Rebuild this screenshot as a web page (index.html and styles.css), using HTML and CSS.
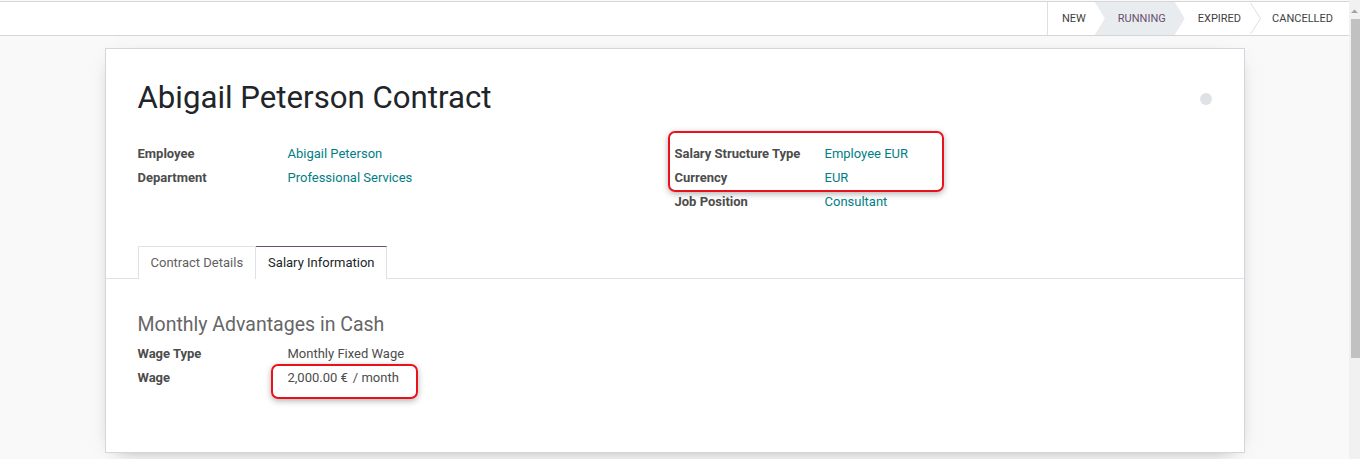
FILE: index.html
```html
<!DOCTYPE html>
<html>
<head>
<meta charset="utf-8">
<link rel="stylesheet" href="styles.css">
</head>
<body>
<div class="app">
  <header class="topbar">
    <div class="statusbar">
      <span class="step first">NEW</span>
      <span class="step current">RUNNING</span>
      <span class="step after">EXPIRED</span>
      <svg class="sep" width="11" height="33" viewBox="0 0 11 33"><polyline points="0.5,1 10.5,16.5 0.5,32" fill="none" stroke="#dcdfe3" stroke-width="1"/></svg>
      <span class="step last">CANCELLED</span>
    </div>
  </header>
  <main class="content">
    <section class="sheet">
      <div class="title-row">
        <h1 class="title">Abigail Peterson Contract</h1>
        <span class="dot"></span>
      </div>
      <div class="groups">
        <div class="group">
          <div class="row"><span class="label">Employee</span><span class="value link">Abigail Peterson</span></div>
          <div class="row"><span class="label">Department</span><span class="value link">Professional Services</span></div>
        </div>
        <div class="group">
          <div class="row"><span class="label">Salary Structure Type</span><span class="value link">Employee EUR</span></div>
          <div class="row"><span class="label">Currency</span><span class="value link">EUR</span></div>
          <div class="row"><span class="label">Job Position</span><span class="value link">Consultant</span></div>
        </div>
      </div>
      <nav class="tabs">
        <span class="tab">Contract Details</span>
        <span class="tab active">Salary Information</span>
      </nav>
      <div class="tab-content">
        <h2 class="section">Monthly Advantages in Cash</h2>
        <div class="row"><span class="label">Wage Type</span><span class="value">Monthly Fixed Wage</span></div>
        <div class="row"><span class="label">Wage</span><span class="value">2,000.00 €<span class="unit">/ month</span></span></div>
      </div>
      <div class="mark mark-salary"></div>
      <div class="mark mark-wage"></div>
    </section>
  </main>
</div>
<div class="scrollbar">
  <svg class="arrow" width="11" height="8" viewBox="0 0 11 8"><polygon points="2,6 9,6 5.5,2.5" fill="#a3a3a3"/></svg>
  <div class="thumb"></div>
</div>
</body>
</html>
```

FILE: styles.css
```css
* { box-sizing: border-box; }
html, body { margin: 0; padding: 0; }
body {
  display: flex;
  width: 1360px;
  height: 459px;
  overflow: hidden;
  font-family: Roboto, "Liberation Sans", sans-serif;
  font-size: 13px;
  color: #4c4c4c;
  background: #f9f9f9;
}
.app {
  width: 1349px;
  flex: none;
  display: flex;
  flex-direction: column;
}
.topbar {
  margin-top: 1px;
  height: 35px;
  background: #fff;
  border-top: 1px solid #d6d6d6;
  border-bottom: 1px solid #d6d6d6;
  display: flex;
  justify-content: flex-end;
}
.statusbar {
  display: flex;
  height: 33px;
  border-left: 1px solid #dcdfe3;
}
.step {
  display: flex;
  align-items: center;
  height: 33px;
  font-size: 11px;
  color: #3f3f3f;
  padding: 0 9px 0 23px;
  white-space: nowrap;
}
.step.first { padding-left: 14px; }
.step.current {
  background: #e9ecef;
  color: #674f73;
  padding-right: 19px;
  clip-path: polygon(0 0, calc(100% - 10px) 0, 100% 50%, calc(100% - 10px) 100%, 0 100%, 10px 50%);
}
.step.after { margin-left: -10px; }
.sep { flex: none; display: block; }
.step.last { padding-left: 11px; padding-right: 16px; }

.content {
  flex: 1;
  padding-top: 12px;
}
.sheet {
  position: relative;
  width: 1140px;
  height: 405px;
  margin: 0 auto;
  background: #fff;
  border: 1px solid #d3d7dd;
  box-shadow: 0 5px 20px -12px rgba(0,0,0,0.55);
  padding: 30px 32px 0 32px;
}
.title-row {
  display: flex;
  justify-content: space-between;
  align-items: flex-start;
}
.title {
  margin: 0;
  font-size: 31.2px;
  font-weight: 400;
  line-height: 37px;
  color: #212529;
}
.dot {
  width: 12px;
  height: 12px;
  border-radius: 50%;
  background: #dee2e6;
  margin-top: 14px;
}
.groups {
  display: grid;
  grid-template-columns: 1fr 1fr;
  margin-top: 26px;
  height: 72px;
}
.row {
  display: flex;
  height: 24px;
  line-height: 24px;
}
.label {
  width: 150px;
  flex: none;
  font-weight: 700;
  color: #4c4c4c;
}
.value { color: #4c4c4c; }
.value.link { color: #017e84; }
.unit { margin-left: 5px; }

.tabs {
  display: flex;
  margin: 32px -32px 0;
  padding-left: 32px;
  border-bottom: 1px solid #dee2e6;
  height: 33px;
}
.tab {
  height: 33px;
  padding: 0 12px;
  line-height: 31px;
  border: 1px solid #dee2e6;
  border-bottom: none;
  color: #5f5f5f;
  background: #fff;
}
.tab.active {
  border-top-color: #714b67;
  color: #212529;
  border-left: none;
  padding-left: 12px;
  padding-right: 11px;
}
.tab-content { padding-top: 34px; }
.section {
  margin: 0 0 6px;
  font-size: 19.5px;
  font-weight: 400;
  line-height: 23px;
  color: #666;
}

.mark {
  position: absolute;
  border: 2px solid #e8121b;
  border-radius: 7px;
  box-shadow: 0 2px 6px rgba(0,0,0,0.3);
}
.mark-salary { left: 562px; top: 82px; width: 276px; height: 61px; }
.mark-wage { left: 165px; top: 315px; width: 147px; height: 35px; }

.scrollbar {
  width: 11px;
  flex: none;
  background: #f1f1f1;
  display: flex;
  flex-direction: column;
  align-items: flex-end;
}
.arrow { display: block; margin-top: 7px; margin-bottom: 4px; }
.thumb {
  width: 9px;
  height: 339px;
  background: #c1c1c1;
}
```
